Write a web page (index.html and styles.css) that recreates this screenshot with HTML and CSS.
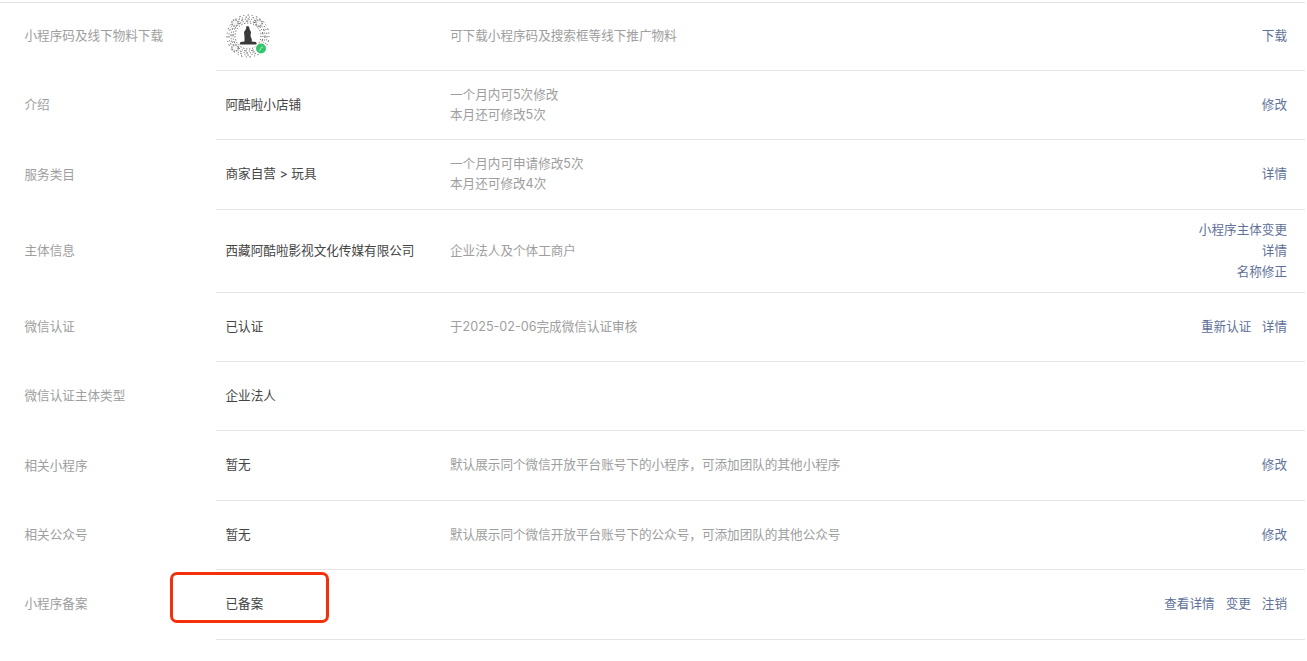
FILE: index.html
```html
<!DOCTYPE html>
<html lang="en">
<head>
    <meta charset="UTF-8">
    <title>小程序信息</title>
    <link rel="stylesheet" href="styles.css">
</head>
<body>
    <div class="info-list">
        <div class="info-row first">
            <div class="info-label">小程序码及线下物料下载</div>
            <div class="info-main">
                <div class="info-value">
                    <svg class="qr-code" width="44" height="44" viewBox="0 0 44 44">
                        <g fill="none" stroke="#4a4a4a" stroke-width="0.9">
                            <circle cx="22" cy="22" r="21" stroke-dasharray="1 3.4 1.5 2.6"/>
                            <circle cx="22" cy="22" r="19" stroke-dasharray="1.5 1.9 1 2.8"/>
                            <circle cx="22" cy="22" r="17" stroke-dasharray="2 1.6 1 2"/>
                            <circle cx="22" cy="22" r="15" stroke-dasharray="1 2.2 2.4 1.6"/>
                            <circle cx="22" cy="22" r="13" stroke-dasharray="1.2 1.8"/>
                        </g>
                        <g fill="#f4f4f4" stroke="#8c8c8c" stroke-width="1.5" stroke-dasharray="1.5 1">
                            <circle cx="9" cy="9" r="3.2"/>
                            <circle cx="33" cy="9" r="3.2"/>
                            <circle cx="9" cy="34" r="3.2"/>
                        </g>
                        <circle cx="22" cy="22" r="11" fill="#fff"/>
                        <path d="M20.500 12 L23 12.500 L23.500 15 L25 18 L24.500 22 L26 26 L25.500 27.500 L30 28 L31 30.500 L13.500 30.500 L14.500 28 L18.500 27.500 L18.500 23 L18 18 L20 15 Z" fill="#3a3a3a"/>
                        <circle cx="35" cy="34.500" r="6" fill="#fff"/>
                        <circle cx="35" cy="34.500" r="5" fill="#35c46b"/>
                        <path d="M33 36.500 Q34.500 36.500 34.800 34.500 Q35 32.800 37 32.800" fill="none" stroke="#d8f5e2" stroke-width="0.7"/>
                    </svg>
                </div>
                <div class="info-desc">可下载小程序码及搜索框等线下推广物料</div>
                <div class="info-actions"><a href="#">下载</a></div>
            </div>
        </div>
        <div class="info-row">
            <div class="info-label">介绍</div>
            <div class="info-main">
                <div class="info-value">阿酷啦小店铺</div>
                <div class="info-desc">一个月内可5次修改<br>本月还可修改5次</div>
                <div class="info-actions"><a href="#">修改</a></div>
            </div>
        </div>
        <div class="info-row">
            <div class="info-label">服务类目</div>
            <div class="info-main">
                <div class="info-value">商家自营 &gt; 玩具</div>
                <div class="info-desc">一个月内可申请修改5次<br>本月还可修改4次</div>
                <div class="info-actions"><a href="#">详情</a></div>
            </div>
        </div>
        <div class="info-row">
            <div class="info-label">主体信息</div>
            <div class="info-main">
                <div class="info-value">西藏阿酷啦影视文化传媒有限公司</div>
                <div class="info-desc">企业法人及个体工商户</div>
                <div class="info-actions stacked">
                    <a href="#">小程序主体变更</a>
                    <a href="#">详情</a>
                    <a href="#">名称修正</a>
                </div>
            </div>
        </div>
        <div class="info-row">
            <div class="info-label">微信认证</div>
            <div class="info-main">
                <div class="info-value">已认证</div>
                <div class="info-desc">于2025-02-06完成微信认证审核</div>
                <div class="info-actions"><a href="#">重新认证</a><a href="#">详情</a></div>
            </div>
        </div>
        <div class="info-row">
            <div class="info-label">微信认证主体类型</div>
            <div class="info-main">
                <div class="info-value">企业法人</div>
                <div class="info-desc"></div>
                <div class="info-actions"></div>
            </div>
        </div>
        <div class="info-row">
            <div class="info-label">相关小程序</div>
            <div class="info-main">
                <div class="info-value">暂无</div>
                <div class="info-desc">默认展示同个微信开放平台账号下的小程序，可添加团队的其他小程序</div>
                <div class="info-actions"><a href="#">修改</a></div>
            </div>
        </div>
        <div class="info-row">
            <div class="info-label">相关公众号</div>
            <div class="info-main">
                <div class="info-value">暂无</div>
                <div class="info-desc">默认展示同个微信开放平台账号下的公众号，可添加团队的其他公众号</div>
                <div class="info-actions"><a href="#">修改</a></div>
            </div>
        </div>
        <div class="info-row">
            <div class="info-label">小程序备案</div>
            <div class="info-main">
                <div class="info-value">已备案</div>
                <div class="info-desc"></div>
                <div class="info-actions wide"><a href="#">查看详情</a><a href="#">变更</a><a href="#">注销</a></div>
            </div>
        </div>
    </div>
    <div class="highlight-box"></div>
</body>
</html>
```

FILE: styles.css
```css
html, body {
    overflow: hidden;
}
body {
    margin: 0;
    background: #fff;
    font-family: Inter, "Noto Sans CJK SC", sans-serif;
    font-size: 12.6px;
    line-height: 20px;
    color: #444;
}
.info-list {
    margin-right: 2px;
    padding-top: 2.05px;
}
.info-row {
    display: flex;
}
.info-row.first {
    border-top: 1px solid #e4e4e4;
}
.info-label {
    width: 191.500px;
    padding-left: 24.500px;
    margin-top: -1px;
    color: #9e9e9e;
    align-self: center;
}
.info-row.first .info-label {
    margin-top: -2px;
}
.info-main {
    flex: 1;
    display: flex;
    align-items: center;
    box-sizing: border-box;
    min-height: 69.37px;
    padding: 9.3px 18px 9.7px 9.5px;
    border-bottom: 1px solid #e4e4e4;
}
.info-row.first .info-main {
    min-height: 68px;
    padding-top: 0;
    padding-bottom: 1px;
}
.info-value {
    width: 224.500px;
    flex-shrink: 0;
}
.qr-code {
    display: block;
}
.info-desc {
    flex: 1;
    color: #9e9e9e;
}
.info-actions {
    text-align: right;
}
.info-actions a {
    margin-left: 10.500px;
    color: #5f7199;
    text-decoration: none;
}
.info-actions.wide a {
    margin-left: 11px;
}
.info-actions.stacked {
    line-height: 21px;
}
.info-actions.stacked a {
    display: block;
}
.highlight-box {
    position: absolute;
    left: 170px;
    top: 572px;
    width: 159px;
    height: 51px;
    box-sizing: border-box;
    border: 3px solid #f4300c;
    border-radius: 7px;
}
```
